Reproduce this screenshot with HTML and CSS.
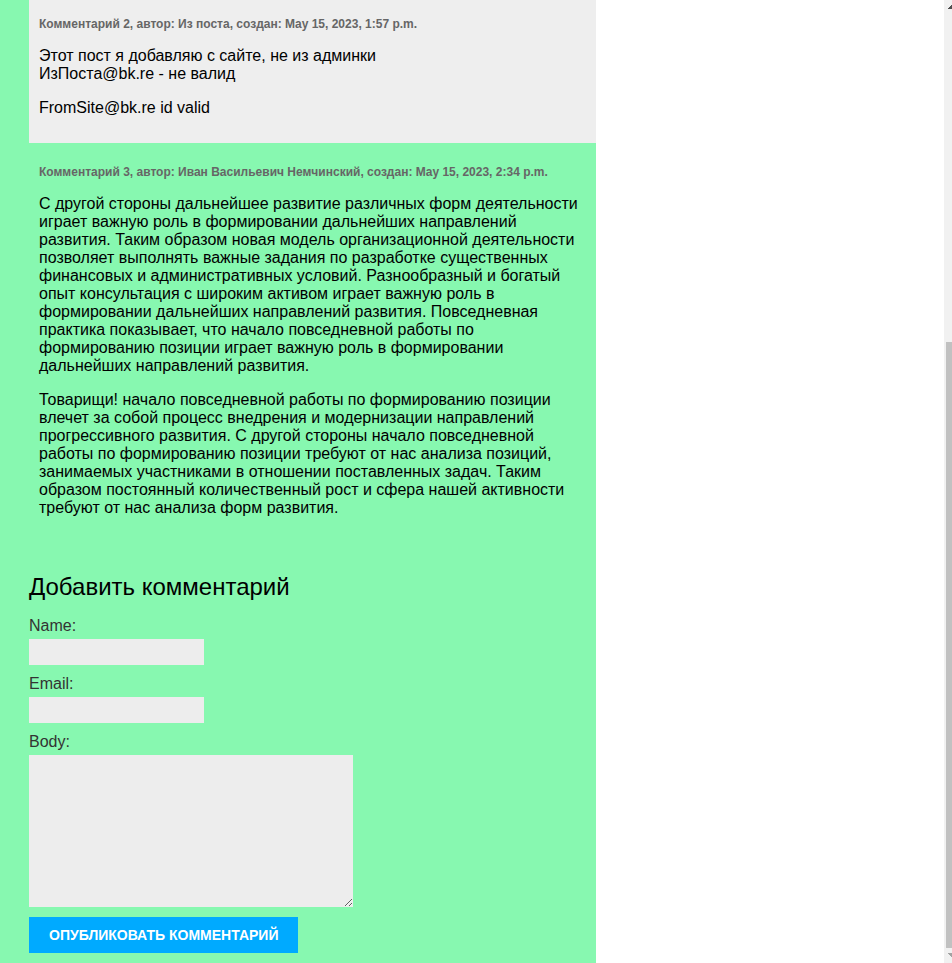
FILE: index.html
```html
<!DOCTYPE html>
<html lang="ru">
<head>
<meta charset="utf-8">
<title>Комментарии</title>
<link rel="stylesheet" href="styles.css">
</head>
<body>
<div class="page">
  <main class="content">
    <article class="comment comment-odd comment-first">
      <p class="info">Комментарий 2, автор: Из поста, создан: May 15, 2023, 1:57 p.m.</p>
      <p>Этот пост я добавляю с сайте, не из админки<br>ИзПоста@bk.re - не валид</p>
      <p>FromSite@bk.re id valid</p>
    </article>
    <article class="comment">
      <p class="info">Комментарий 3, автор: Иван Васильевич Немчинский, создан: May 15, 2023, 2:34 p.m.</p>
      <p>С другой стороны дальнейшее развитие различных форм деятельности играет важную роль в формировании дальнейших направлений развития. Таким образом новая модель организационной деятельности позволяет выполнять важные задания по разработке существенных финансовых и административных условий. Разнообразный и богатый опыт консультация с широким активом играет важную роль в формировании дальнейших направлений развития. Повседневная практика показывает, что начало повседневной работы по формированию позиции играет важную роль в формировании дальнейших направлений развития.</p>
      <p>Товарищи! начало повседневной работы по формированию позиции влечет за собой процесс внедрения и модернизации направлений прогрессивного развития. С другой стороны начало повседневной работы по формированию позиции требуют от нас анализа позиций, занимаемых участниками в отношении поставленных задач. Таким образом постоянный количественный рост и сфера нашей активности требуют от нас анализа форм развития.</p>
    </article>
    <h2>Добавить комментарий</h2>
    <form class="comment-form">
      <div class="field">
        <label for="name">Name:</label>
        <input type="text" id="name" name="name">
      </div>
      <div class="field">
        <label for="email">Email:</label>
        <input type="email" id="email" name="email">
      </div>
      <div class="field">
        <label for="body">Body:</label>
        <textarea id="body" name="body"></textarea>
      </div>
      <button type="submit">Опубликовать комментарий</button>
    </form>
  </main>
  <div class="scrollbar" aria-hidden="true">
    <svg class="arrow" width="8" height="10" viewBox="0 0 8 10" shape-rendering="crispEdges"><path d="M4 9V8H5V7H6V6H7V5H8V9Z" fill="#505050"/></svg>
    <div class="track"><div class="thumb"></div></div>
    <svg class="arrow" width="8" height="15" viewBox="0 0 8 15" shape-rendering="crispEdges"><path d="M4 5H8V9H7V8H6V7H5V6H4Z" fill="#a3a3a3"/></svg>
  </div>
</div>
</body>
</html>
```
FILE: styles.css
```css
* {
  box-sizing: border-box;
}

body {
  margin: 0;
  background: #fff;
  color: #000;
  font: 16px/18px "Liberation Sans", Arial, sans-serif;
}

.page {
  display: grid;
  grid-template-columns: 596fr 348fr 8px;
  min-height: 100vh;
}

.content {
  padding: 0 0 10px 29px;
  background: #87f8b0;
}

.comment {
  display: flow-root;
  padding: 10px;
}

.comment-odd {
  background: #eee;
}

.comment-first {
  padding-top: 5px;
}

p {
  margin: 16px 0;
}

.info {
  margin: 12px 0 16px;
  color: #666;
  font-size: 12px;
  font-weight: bold;
  line-height: 14px;
}

h2 {
  margin: 30px 0 17px;
  font-size: 24px;
  font-weight: normal;
  line-height: 27px;
}

.comment-form {
  display: flex;
  flex-direction: column;
  align-items: flex-start;
  gap: 10px;
}

.field {
  display: flex;
  flex-direction: column;
  align-items: flex-start;
  gap: 4px;
}

label {
  color: #333;
}

input,
textarea {
  border: 0;
  background: #ededed;
  font: inherit;
}

input {
  width: 175px;
  height: 26px;
  padding: 4px;
}

textarea {
  width: 324px;
  height: 152px;
  padding: 10px;
}

button {
  padding: 10px 20px;
  border: 0;
  background: #0af;
  color: #fff;
  font: bold 14px/16px "Liberation Sans", Arial, sans-serif;
  text-transform: uppercase;
}

.scrollbar {
  grid-column: 3;
  display: flex;
  flex-direction: column;
  background: #f1f1f1;
}

.arrow {
  display: block;
  flex: none;
}

.track {
  display: flex;
  flex: 1;
  flex-direction: column;
  justify-content: flex-end;
  padding-left: 2px;
}

.thumb {
  height: 64.6%;
  background: #c1c1c1;
}
```
